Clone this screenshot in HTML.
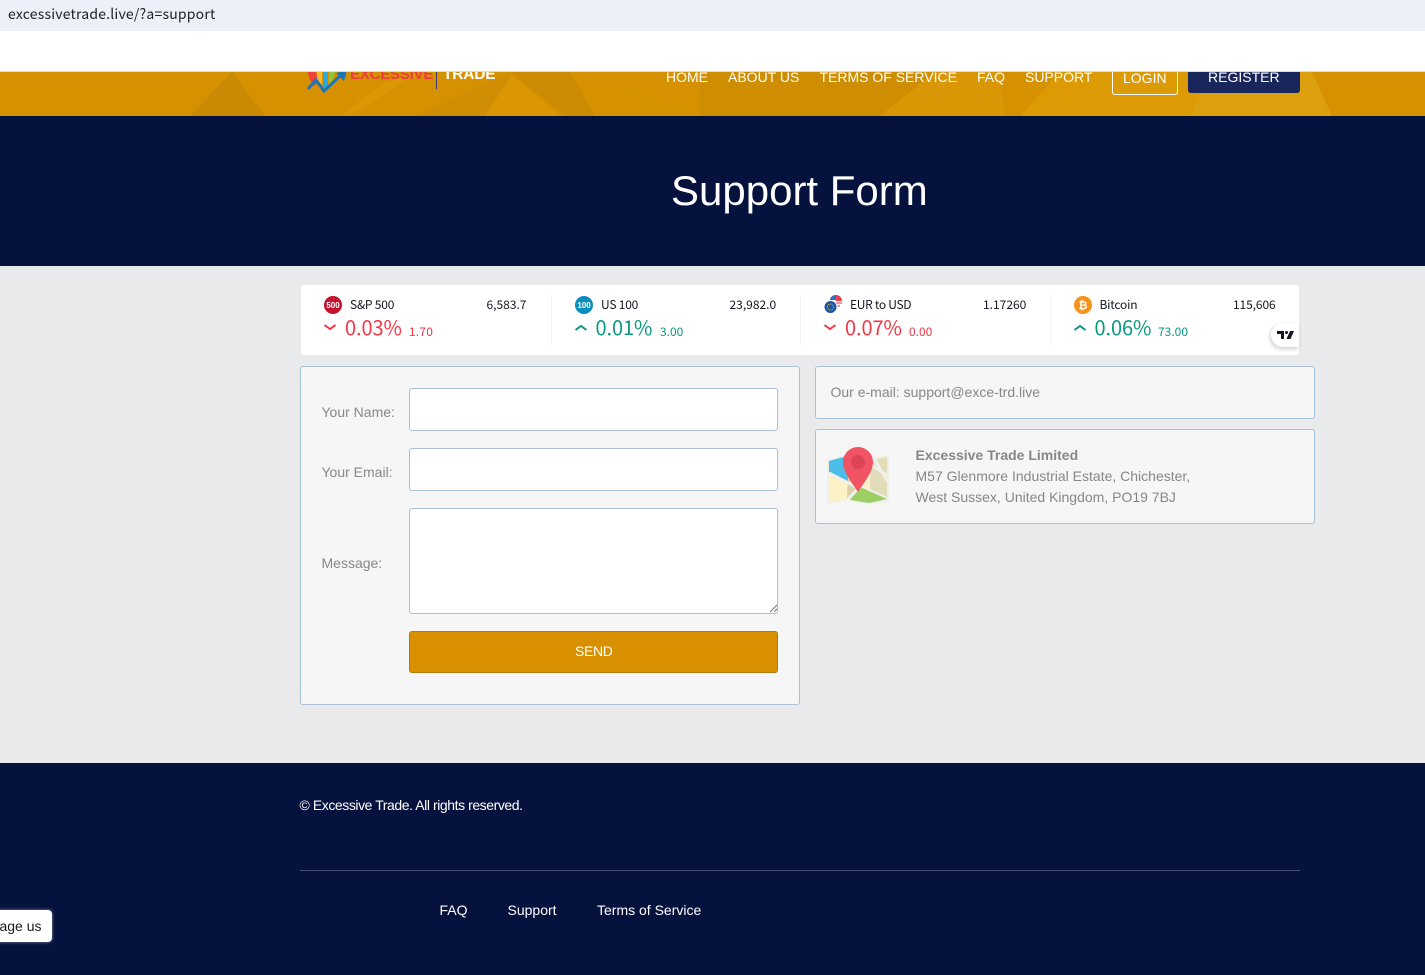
<!DOCTYPE html>
<html><head><meta charset="utf-8"><title>Support Form</title>
<style>
*{box-sizing:border-box}
html,body{margin:0;padding:0}
body{width:1425px;height:975px;position:relative;overflow:hidden;background:#e8eaec;font-family:"Liberation Sans",sans-serif}
.a{position:absolute;white-space:nowrap}
.nav{top:69px;color:#fff;font-size:14px;line-height:16px}
.box{position:absolute;background:#f6f6f6;border:1px solid #a9bfd6;border-radius:3px}
.inp{position:absolute;background:#fff;border:1px solid #a9bfd6;border-radius:3px;left:409px;width:369px}
.lab{color:#878787;font-size:14px;line-height:16px;left:321.5px}
.tk{font-family:"Noto Sans CJK SC","Noto Sans CJK JP",sans-serif;font-size:12px;line-height:14px;color:#131722;letter-spacing:-.2px}
.pc{font-family:"Noto Sans CJK SC","Noto Sans CJK JP",sans-serif;font-size:20px;line-height:24px;letter-spacing:-.1px}
.ch{font-family:"Noto Sans CJK SC","Noto Sans CJK JP",sans-serif;font-size:12px;line-height:14px}
.r{color:#f23645}.g{color:#089981}
.sep{position:absolute;top:295px;width:1px;height:50px;background:#f0f3fa}
.ft{color:#fff;font-size:14px;line-height:16px;top:902px}
</style></head><body>

<div class="a" style="left:0;top:0;width:1425px;height:31px;background:#ebf0f9"></div>
<div class="a" style="left:8px;top:4px;font:14px/20px 'Noto Sans CJK SC',sans-serif;color:#202124;letter-spacing:.2px">excessivetrade.live/?a=support</div>
<div class="a" style="left:0;top:31px;width:1425px;height:40px;background:#fff"></div>
<div class="a" style="left:0;top:71px;width:1425px;height:1px;background:#ddd"></div>

<svg class="a" style="left:0;top:72px" width="1425" height="44" viewBox="0 0 1425 44">
<rect width="1425" height="44" fill="#d69100"/>
<polygon points="190,44 232,0 265,44" fill="#c98a04"/>
<polygon points="340,44 385,10 420,0 350,44" fill="#db9703"/>
<polygon points="415,44 510,0 545,44" fill="#cf8e03"/>
<polygon points="485,44 512,3 560,44" fill="#da9603"/>
<polygon points="510,0 570,0 595,44 565,44" fill="#cb8b03"/>
<polygon points="600,0 700,44 640,44" fill="#d49201"/>
<polygon points="700,0 960,0 1000,44 700,44" fill="#cf8d01"/>
<polygon points="880,44 935,0 1000,0 1005,44" fill="#da9705"/>
<polygon points="1020,44 1060,0 1300,0 1332,44" fill="#dc9a05"/>
<polygon points="1190,44 1210,0 1312,0 1332,44" fill="#dca00e"/>
</svg>

<svg class="a" style="left:305px;top:72px" width="50" height="24" viewBox="0 0 50 24">
<path d="M3 0 Q4 8 9 14 L13 10 L11 0Z" fill="#ef4136"/>
<rect x="12" y="0" width="5" height="12" fill="#f7b731"/>
<rect x="18" y="0" width="5" height="16" fill="#27aae1"/>
<path d="M24 0h6l-3 9-3 3z" fill="#8dc63f"/>
<path d="M3 17 L11 8 L19 19 L36 3" fill="none" stroke="#1b75bb" stroke-width="3"/>
<polygon points="31,1 42,-2 39,9" fill="#1b75bb"/>
</svg>
<div class="a" style="left:350px;top:66px;font:bold 15px/18px 'Liberation Sans',sans-serif;color:#ee3a43;height:18px;clip-path:inset(6px 0 0 0);letter-spacing:-.2px">EXCESSIVE</div>
<div class="a" style="left:436px;top:72px;width:1px;height:17px;background:#3f3a6b"></div>
<div class="a" style="left:443px;top:66px;font:bold 15.500px/18px 'Liberation Sans',sans-serif;color:#fff;height:18px;clip-path:inset(6px 0 0 0);letter-spacing:-.2px">TRADE</div>

<div class="a nav" style="left:666px">HOME</div>
<div class="a nav" style="left:728px">ABOUT US</div>
<div class="a nav" style="left:819.500px">TERMS OF SERVICE</div>
<div class="a nav" style="left:977px">FAQ</div>
<div class="a nav" style="left:1025px">SUPPORT</div>
<div class="a" style="left:1112px;top:72px;width:66px;height:23px;border:1px solid #fff;border-top:0;border-radius:0 0 3px 3px"></div>
<div class="a" style="left:1123px;top:70px;color:#fff;font-size:14px;line-height:16px">LOGIN</div>
<div class="a" style="left:1188px;top:72px;width:112px;height:21px;background:#19265c;border-radius:0 0 3px 3px"></div>
<div class="a nav" style="left:1208px">REGISTER</div>

<div class="a" style="left:0;top:116px;width:1425px;height:150px;background:#06123e"></div>
<div class="a" style="left:671px;top:167px;color:#fff;font-size:42px;line-height:48px">Support Form</div>

<div class="a" style="left:301px;top:285px;width:998px;height:70px;background:#fff;border-radius:3px"></div>
<div class="sep" style="left:551px"></div>
<div class="sep" style="left:800px"></div>
<div class="sep" style="left:1050px"></div>

<svg class="a" style="left:324px;top:296px" width="18" height="18"><circle cx="9" cy="9" r="9" fill="#c4122f"/><text x="9" y="12" font-family="Liberation Sans" font-size="8" font-weight="bold" fill="#fff" text-anchor="middle">500</text></svg>
<div class="a tk" style="left:350px;top:298px">S&amp;P 500</div>
<div class="a tk" style="left:486.500px;top:298px;letter-spacing:0">6,583.7</div>
<svg class="a" style="left:323px;top:322px" width="14" height="11"><path d="M1.500 3l5.500 4 5.500-4" fill="none" stroke="#f23645" stroke-width="2"/></svg>
<div class="a pc r" style="left:345px;top:315px">0.03%</div>
<div class="a ch r" style="left:409px;top:325px;letter-spacing:.2px">1.70</div>

<svg class="a" style="left:575px;top:296px" width="18" height="18"><circle cx="9" cy="9" r="9" fill="#0a8fbd"/><text x="9" y="12" font-family="Liberation Sans" font-size="8" font-weight="bold" fill="#fff" text-anchor="middle">100</text></svg>
<div class="a tk" style="left:601px;top:298px">US 100</div>
<div class="a tk" style="left:729.500px;top:298px;letter-spacing:0">23,982.0</div>
<svg class="a" style="left:574px;top:323px" width="14" height="11"><path d="M1.500 7l5.500-4 5.500 4" fill="none" stroke="#089981" stroke-width="2"/></svg>
<div class="a pc g" style="left:595.500px;top:315px">0.01%</div>
<div class="a ch g" style="left:660px;top:325px">3.00</div>

<svg class="a" style="left:823px;top:295px" width="20" height="20"><circle cx="13" cy="6" r="6" fill="#e8e8f0"/><path d="M13 0a6 6 0 0 1 6 6h-6z" fill="#e2434f"/><path d="M13 8h6M13 11h4" stroke="#e2434f" stroke-width="1"/><path d="M7 4a6 6 0 0 1 6-4v5H7z" fill="#3a6fc0"/><circle cx="7.500" cy="12" r="6.500" fill="#1f57a5" stroke="#fff" stroke-width="1"/><circle cx="7.500" cy="12" r="3" fill="none" stroke="#f5c518" stroke-width="1" stroke-dasharray="1 1.300"/></svg>
<div class="a tk" style="left:850px;top:298px;letter-spacing:-.3px">EUR to USD</div>
<div class="a tk" style="left:983px;top:298px;letter-spacing:0">1.17260</div>
<svg class="a" style="left:823px;top:322px" width="14" height="11"><path d="M1.500 3l5.500 4 5.500-4" fill="none" stroke="#f23645" stroke-width="2"/></svg>
<div class="a pc r" style="left:845px;top:315px">0.07%</div>
<div class="a ch r" style="left:909px;top:325px">0.00</div>

<svg class="a" style="left:1074px;top:296px" width="18" height="18"><circle cx="9" cy="9" r="9" fill="#f7931a"/><text x="9" y="13" font-family="Liberation Sans" font-size="11" font-weight="bold" fill="#fff" text-anchor="middle">₿</text></svg>
<div class="a tk" style="left:1099.500px;top:298px">Bitcoin</div>
<div class="a tk" style="left:1233px;top:298px;letter-spacing:-.1px">115,606</div>
<svg class="a" style="left:1073px;top:323px" width="14" height="11"><path d="M1.500 7l5.500-4 5.500 4" fill="none" stroke="#089981" stroke-width="2"/></svg>
<div class="a pc g" style="left:1094.500px;top:315px">0.06%</div>
<div class="a ch g" style="left:1158px;top:325px">73.00</div>

<div class="a" style="left:1271px;top:323px;width:28px;height:24px;background:#fff;border-radius:12px 0 0 12px;box-shadow:-1px 2px 4px rgba(0,0,0,.2)"></div>
<svg class="a" style="left:1277px;top:330px" width="18" height="10" viewBox="0 0 18 10"><path d="M0 1h7v8H4V4H0z" fill="#131722"/><circle cx="9.500" cy="2.500" r="1.500" fill="#131722"/><path d="M13 1h4l-3.500 8H9.500z" fill="#131722"/></svg>

<div class="box" style="left:300px;top:366px;width:500px;height:339px"></div>
<div class="a lab" style="top:404px">Your Name:</div>
<div class="inp" style="top:388px;height:43px"></div>
<div class="a lab" style="top:464px">Your Email:</div>
<div class="inp" style="top:448px;height:43px"></div>
<div class="a lab" style="top:555px">Message:</div>
<div class="inp" style="top:508px;height:106px"></div>
<svg class="a" style="left:768px;top:603px" width="10" height="10"><path d="M2 9l7-7M6 9l3-3" stroke="#777" stroke-width="1" fill="none"/></svg>
<div class="a" style="left:409px;top:631px;width:369px;height:42px;background:#d89000;border:1px solid #b27a08;border-radius:3px"></div>
<div class="a" style="left:575px;top:643px;color:#fff;font-size:14px;line-height:16px;letter-spacing:-.35px">SEND</div>

<div class="box" style="left:815px;top:366px;width:500px;height:53px"></div>
<div class="a lab" style="left:830.500px;top:384px">Our e-mail: support@exce-trd.live</div>

<div class="box" style="left:815px;top:429px;width:500px;height:95px"></div>
<svg class="a" style="left:826px;top:445px" width="65" height="62" viewBox="0 0 65 62">
<polygon points="1,15 22,9 43,15 63,9 63,57 43,60 22,55 1,60" fill="#f0f0ea"/>
<polygon points="3,16 21,11 29,40 3,27" fill="#4cbce8"/>
<polygon points="3,30 30,43 21,54 3,57" fill="#fdf1c7"/>
<polygon points="22,11 35,14 33,42 27,38" fill="#5aa9cc"/>
<polygon points="22,29 30,43 21,54" fill="#d9cfa8"/>
<polygon points="24,55 34,42 61,54 43,58" fill="#9ccf63"/>
<polygon points="36,40 42,16 61,12 61,52" fill="#e2dcb8"/>
<polygon points="36,40 44,26 44,47" fill="#fdf1c7"/>
<path d="M3 28l27 14M61 30L42 18M34 42L22 54M46 10L61 36" stroke="#f0f0ea" stroke-width="3" fill="none"/>
<path d="M32 47C25 36 17 27 17 17a15 15 0 0 1 30 0C47 27 39 36 32 47z" fill="#f05464"/>
<circle cx="32" cy="17" r="7" fill="#dc4556"/>
</svg>
<div class="a" style="left:915.500px;top:447px;color:#878787;font-size:14px;line-height:16px;font-weight:bold">Excessive Trade Limited</div>
<div class="a lab" style="left:915.500px;top:468px">M57 Glenmore Industrial Estate, Chichester,</div>
<div class="a lab" style="left:915.500px;top:489px">West Sussex, United Kingdom, PO19 7BJ</div>

<div class="a" style="left:0;top:763px;width:1425px;height:212px;background:#06123e"></div>
<div class="a" style="left:299.500px;top:797px;color:#fff;font-size:14px;line-height:16px;letter-spacing:-.43px">© Excessive Trade. All rights reserved.</div>
<div class="a" style="left:300px;top:870px;width:1000px;height:1px;background:#464c70"></div>
<div class="a ft" style="left:439.500px">FAQ</div>
<div class="a ft" style="left:507.500px">Support</div>
<div class="a ft" style="left:597px">Terms of Service</div>

<div class="a" style="left:-20px;top:910px;width:72px;height:32px;background:#fff;border-radius:4px;box-shadow:0 0 3px rgba(255,255,255,.5);overflow:hidden">
<div style="position:absolute;right:10.500px;top:8px;font-size:14px;line-height:16px;color:#1a1a1a;white-space:nowrap">Message us</div></div>
</body></html>
